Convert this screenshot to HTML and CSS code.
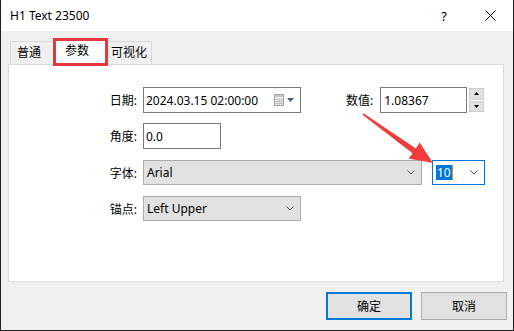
FILE: index.html
```html
<!DOCTYPE html>
<html lang="zh">
<head>
	<meta charset="UTF-8">
	<title>H1 Text 23500</title>
	<link rel="stylesheet" href="styles.css">
</head>
<body>
	<div class="win">
		<div class="titlebar">
			<span class="title">H1 Text 23500</span>
			<span class="help">?</span>
			<svg class="close" width="11" height="11" viewBox="0 0 11 11"><path d="M0.5 0.5L10.5 10.5M10.5 0.5L0.5 10.5" stroke="#000" stroke-width="1" fill="none"/></svg>
		</div>
		<div class="client">
			<div class="tabs">
				<div class="tab t1">普通</div>
				<div class="tab t2 on">参数</div>
				<div class="tab t3">可视化</div>
			</div>
			<div class="panel">
				<div class="row r1">
					<span class="lbl">日期:</span>
					<div class="edit date">
						<span class="val">2024.03.15 02:00:00</span>
						<svg class="cal" width="10" height="12" viewBox="0 0 10 12">
							<rect x="0.5" y="0.5" width="9" height="11" fill="#f4f4f4" stroke="#a0a0a0"/>
							<rect x="1" y="1" width="8" height="2" fill="#c8c8c8"/>
							<path d="M1 5.5H9M1 7.5H9M1 9.5H9M3.5 4V11M5.5 4V11M7.5 4V11" stroke="#c4c4c4" stroke-width="1"/>
						</svg>
						<svg class="drop" width="7" height="4" viewBox="0 0 7 4"><path d="M0 0H7L3.5 4Z" fill="#4d5b7c"/></svg>
					</div>
					<span class="lbl2">数值:</span>
					<div class="edit num"><span class="val">1.08367</span></div>
					<div class="spin">
						<div class="sb"><svg width="5" height="3" viewBox="0 0 5 3"><path d="M0 3H5L2.5 0Z" fill="#000"/></svg></div>
						<div class="sb"><svg width="5" height="3" viewBox="0 0 5 3"><path d="M0 0H5L2.5 3Z" fill="#000"/></svg></div>
					</div>
				</div>
				<div class="row r2">
					<span class="lbl">角度:</span>
					<div class="edit angle"><span class="val">0.0</span></div>
				</div>
				<div class="row r3">
					<span class="lbl">字体:</span>
					<div class="combo font">
						<span class="val">Arial</span>
						<svg class="chev" width="8" height="5" viewBox="0 0 8 5"><path d="M0.5 0.5L4 4L7.5 0.5" stroke="#555" fill="none"/></svg>
					</div>
					<div class="combo size">
						<span class="sel">10</span><span class="caret"></span>
						<svg class="chev" width="8" height="5" viewBox="0 0 8 5"><path d="M0.5 0.5L4 4L7.5 0.5" stroke="#555" fill="none"/></svg>
					</div>
				</div>
				<div class="row r4">
					<span class="lbl">锚点:</span>
					<div class="combo anchor">
						<span class="val">Left Upper</span>
						<svg class="chev" width="8" height="5" viewBox="0 0 8 5"><path d="M0.5 0.5L4 4L7.5 0.5" stroke="#555" fill="none"/></svg>
					</div>
				</div>
			</div>
			<div class="btns">
				<div class="btn def">确定</div>
				<div class="btn">取消</div>
			</div>
		</div>
		<div class="mark"></div>
		<svg class="arrow" width="514" height="331" viewBox="0 0 514 331">
			<polygon points="363.5,113.3 415.9,148.6 419.6,142.6 433,163 408.6,158.4 412.6,153.2 362.5,114.7" fill="#f03c3c"/>
		</svg>
	</div>
</body>
</html>
```

FILE: styles.css
```css
*{
	box-sizing: border-box;
}
body{
	margin: 0;
	font-family: "Noto Sans", "Noto Sans CJK SC", sans-serif;
	font-size: 12px;
	color: #000;
}
.win{
	width: 514px;
	height: 331px;
	position: relative;
	background: #f0f0f0;
	border-left: 1px solid #202020;
	border-right: 1px solid #202020;
	border-bottom: 1px solid #202020;
	overflow: hidden;
}
.titlebar{
	height: 31px;
	background: #fff;
	display: flex;
	align-items: center;
	padding-left: 9px;
}
.title{
	font-size: 12px;
	flex: 1;
}
.help{
	font-size: 13px;
	margin-right: 38px;
}
.close{
	margin-right: 17px;
}
.tabs{
	display: flex;
	align-items: flex-end;
	height: 33px;
	padding-left: 9px;
}
.tab{
	height: 23px;
	line-height: 21px;
	background: #f0f0f0;
	border: 1px solid #d9d9d9;
	border-bottom: none;
}
.t1{
	width: 45px;
	padding-left: 6px;
}
.t2{
	width: 51px;
	height: 26px;
	line-height: 22px;
	padding-left: 9px;
	background: #fff;
	margin-bottom: -1px;
	position: relative;
}
.t3{
	width: 46px;
	padding-left: 5px;
	border-left: none;
}
.panel{
	margin-left: 7px;
	width: 496px;
	height: 218px;
	background: #fff;
	border: 1px solid #d9d9d9;
	padding-top: 22px;
}
.row{
	display: flex;
	align-items: center;
	height: 26px;
}
.r2{
	margin-top: 10px;
}
.r3,.r4{
	margin-top: 11px;
	height: 25px;
}
.lbl{
	width: 128px;
	text-align: right;
	margin-right: 6px;
	white-space: nowrap;
	flex-shrink: 0;
}
.lbl2{
	margin-left: 45px;
	margin-right: 7px;
	white-space: nowrap;
	flex-shrink: 0;
}
.edit{
	height: 26px;
	border: 1px solid #7a7a7a;
	background: #fff;
	display: flex;
	align-items: center;
	padding-left: 2px;
	flex-shrink: 0;
}
.val{
	flex: 1;
	white-space: nowrap;
}
.date{
	width: 158px;
}
.cal{
	margin-right: 3px;
}
.drop{
	margin-right: 6px;
}
.num{
	width: 87px;
	padding-left: 3px;
}
.spin{
	margin-left: 2px;
	display: flex;
	flex-direction: column;
	gap: 1px;
	height: 24px;
}
.sb{
	width: 15px;
	flex: 1;
	background: #e1e1e1;
	border: 1px solid #d0d0d0;
	display: flex;
	align-items: center;
	justify-content: center;
}
.angle{
	width: 78px;
}
.combo{
	height: 25px;
	border: 1px solid #adadad;
	background: #e1e1e1;
	display: flex;
	align-items: center;
	padding-left: 3px;
	padding-right: 6px;
	flex-shrink: 0;
}
.font{
	width: 279px;
}
.size{
	width: 53px;
	margin-left: 10px;
	background: #fff;
	border-color: #0078d7;
}
.sel{
	background: #0078d7;
	color: #fff;
	line-height: 15px;
	padding: 0 1px;
}
.caret{
	width: 1px;
	height: 15px;
	background: #f08a24;
	margin-right: auto;
}
.anchor{
	width: 158px;
}
.btns{
	display: flex;
	justify-content: flex-end;
	gap: 9px;
	padding-right: 6px;
	margin-top: 10px;
}
.btn{
	width: 86px;
	height: 28px;
	background: #e1e1e1;
	border: 1px solid #adadad;
	display: flex;
	align-items: center;
	justify-content: center;
}
.def{
	border: 2px solid #0078d7;
}
.mark{
	position: absolute;
	left: 52px;
	top: 38px;
	width: 55px;
	height: 28px;
	border: 3px solid #e8383d;
}
.arrow{
	position: absolute;
	left: -1px;
	top: 0;
}
```
